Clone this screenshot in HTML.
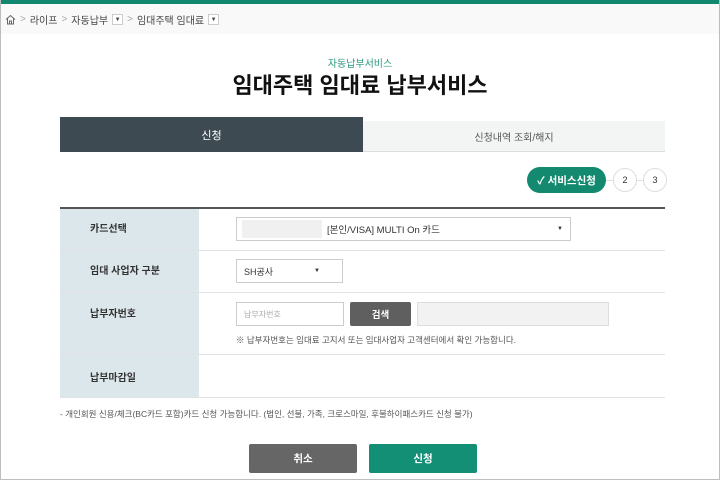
<!DOCTYPE html><html><head><meta charset="utf-8"><style>
*{margin:0;padding:0;box-sizing:border-box}
body{width:720px;height:480px;overflow:hidden;background:#fff;font-family:"Liberation Sans","Noto Sans CJK KR",sans-serif;position:relative;color:#333}
.a{position:absolute}
.frame{left:0;top:0;width:720px;height:480px;border:1px solid #bdbdbd;border-top:none}
.c{display:flex;align-items:center;justify-content:center}
</style></head><body>
<div class="a" style="left:0;top:0;width:720px;height:4px;background:#11876f"></div>
<div class="a" style="left:0;top:4px;width:720px;height:30px;background:#f9f9f9"></div>
<div class="a" style="left:5px;top:12px;font-size:10px;color:#444;display:flex;align-items:center;gap:4px">
<svg width="11" height="11" viewBox="0 0 11 11"><path d="M1 5.5L5.5 1.5L10 5.5M2.5 4.5V10H8.5V4.5M4.5 10V7H6.5V10" fill="none" stroke="#666" stroke-width="1"/></svg>
<span style="color:#aaa">&gt;</span><span>라이프</span><span style="color:#aaa">&gt;</span><span>자동납부</span>
<span style="display:inline-block;width:11px;height:11px;border:1px solid #ccc;background:#fff;font-size:6px;text-align:center;line-height:10px">▼</span>
<span style="color:#aaa">&gt;</span><span>임대주택 임대료</span>
<span style="display:inline-block;width:11px;height:11px;border:1px solid #ccc;background:#fff;font-size:6px;text-align:center;line-height:10px">▼</span>
</div>
<div class="a c" style="left:0;top:55px;width:720px;font-size:10px;color:#2a9a80">자동납부서비스</div>
<div class="a c" style="left:0;top:68px;width:720px;font-size:22px;font-weight:bold;color:#111">임대주택 임대료 납부서비스</div>
<div class="a c" style="left:60px;top:117px;width:303px;height:35px;background:#3d4a52;color:#fff;font-size:11px">신청</div>
<div class="a c" style="left:363px;top:121px;width:302px;height:31px;background:#f3f4f4;color:#555;font-size:10px;border-bottom:1px solid #ddd">신청내역 조회/해지</div>
<div class="a" style="left:600px;top:180px;width:60px;height:1px;background:#ddd"></div>
<div class="a c" style="left:527px;top:167px;width:79px;height:26px;border-radius:13px;background:#138a70;color:#fff;font-size:10.5px;font-weight:bold">✓ 서비스신청</div>
<div class="a c" style="left:613px;top:168px;width:24px;height:24px;border-radius:50%;border:1px solid #ddd;background:#fff;font-size:9px">2</div>
<div class="a c" style="left:643px;top:168px;width:24px;height:24px;border-radius:50%;border:1px solid #ddd;background:#fff;font-size:9px">3</div>
<div class="a" style="left:60px;top:207px;width:605px;height:2px;background:#555"></div>
<div class="a" style="left:60px;top:209px;width:139px;height:189px;background:#dce7ec"></div>
<div class="a" style="left:60px;top:250px;width:605px;height:1px;background:#e2e2e2"></div>
<div class="a" style="left:60px;top:292px;width:605px;height:1px;background:#e2e2e2"></div>
<div class="a" style="left:60px;top:354px;width:605px;height:1px;background:#e2e2e2"></div>
<div class="a" style="left:60px;top:397px;width:605px;height:1px;background:#e2e2e2"></div>
<div class="a" style="left:90px;top:220px;font-size:10px;font-weight:bold">카드선택</div>
<div class="a" style="left:90px;top:262px;font-size:10px;font-weight:bold">임대 사업자 구분</div>
<div class="a" style="left:90px;top:305px;font-size:10px;font-weight:bold">납부자번호</div>
<div class="a" style="left:90px;top:369px;font-size:10px;font-weight:bold">납부마감일</div>
<div class="a" style="left:236px;top:217px;width:335px;height:24px;border:1px solid #ccc;background:#fff"></div>
<div class="a" style="left:242px;top:220px;width:80px;height:18px;background:#f0f0f0"></div>
<div class="a" style="left:327px;top:222px;font-size:9.5px;color:#333">[본인/VISA] MULTI On 카드</div>
<div class="a" style="left:557px;top:226px;font-size:6px">▼</div>
<div class="a" style="left:236px;top:259px;width:107px;height:24px;border:1px solid #ccc;background:#fff"></div>
<div class="a" style="left:244px;top:265px;font-size:9px">SH공사</div>
<div class="a" style="left:314px;top:268px;font-size:6px">▼</div>
<div class="a" style="left:236px;top:302px;width:108px;height:24px;border:1px solid #ccc;background:#fff"></div>
<div class="a" style="left:244px;top:309px;font-size:8px;color:#aaa">납부자번호</div>
<div class="a c" style="left:350px;top:302px;width:61px;height:24px;background:#5f5f5f;border-radius:2px;color:#fff;font-size:9.5px;font-weight:bold">검색</div>
<div class="a" style="left:417px;top:302px;width:192px;height:24px;border:1px solid #ddd;background:#f2f2f2"></div>
<div class="a" style="left:236px;top:334px;font-size:8.5px;color:#555">※ 납부자번호는 임대료 고지서 또는 임대사업자 고객센터에서 확인 가능합니다.</div>
<div class="a" style="left:60px;top:408px;font-size:8.5px;color:#555">- 개인회원 신용/체크(BC카드 포함)카드 신청 가능합니다. (법인, 선불, 가족, 크로스마일, 후불하이패스카드 신청 불가)</div>
<div class="a c" style="left:249px;top:444px;width:108px;height:29px;background:#666;border-radius:2px;color:#fff;font-size:10.5px;font-weight:bold">취소</div>
<div class="a c" style="left:369px;top:444px;width:108px;height:29px;background:#128f75;border-radius:2px;color:#fff;font-size:10.5px;font-weight:bold">신청</div>
<div class="frame a"></div>
</body></html>
